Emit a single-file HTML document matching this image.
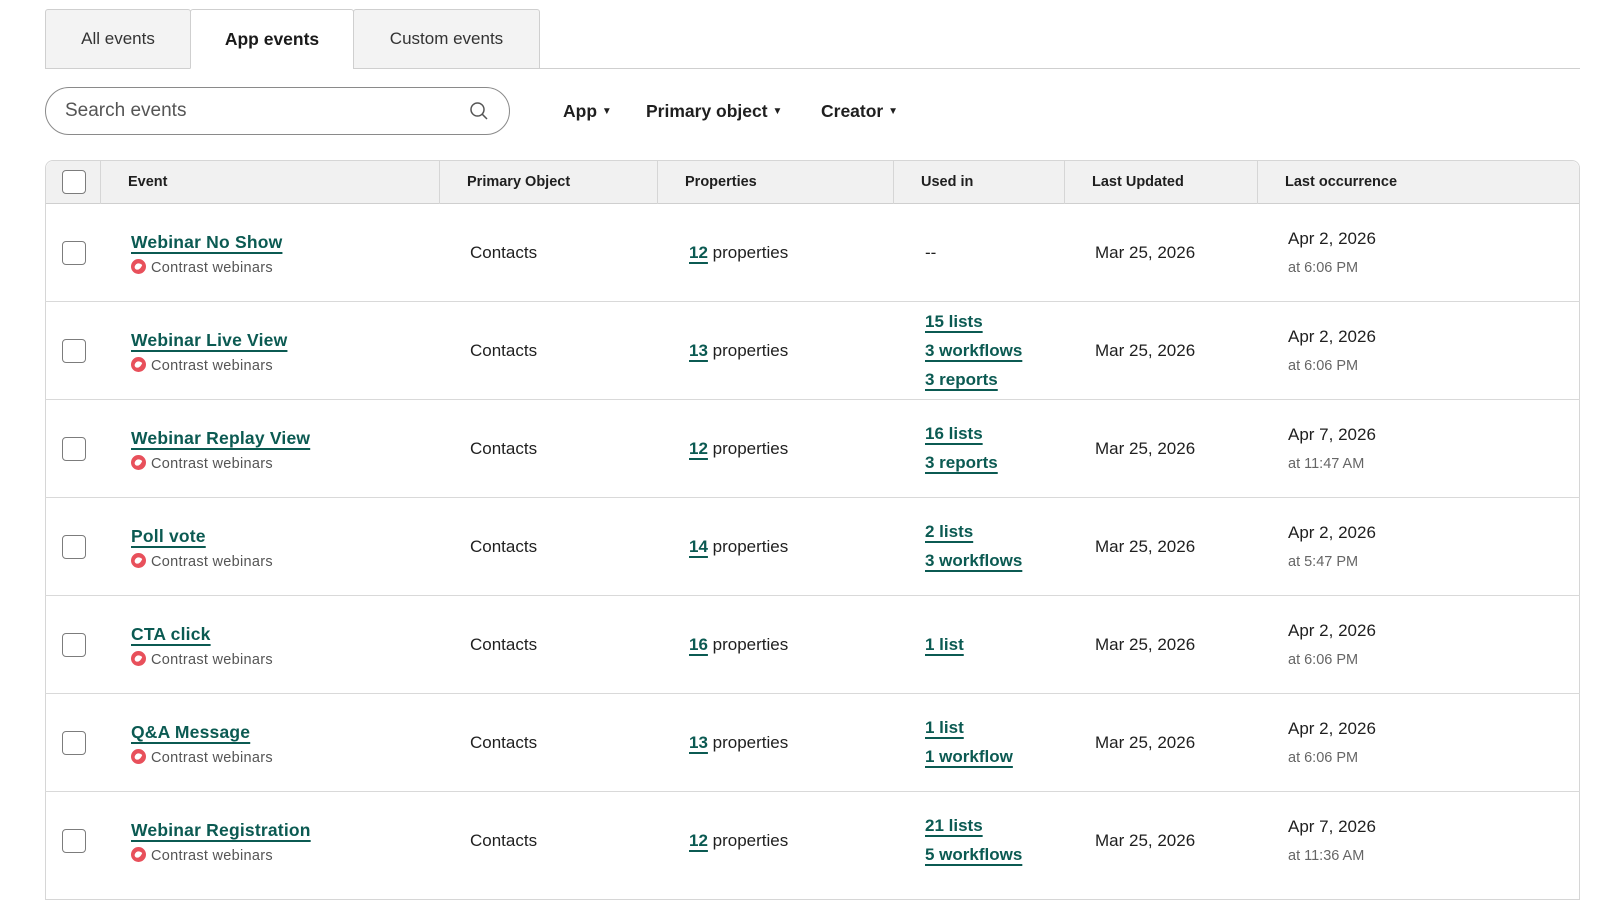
<!DOCTYPE html>
<html><head><meta charset="utf-8">
<style>
*{box-sizing:border-box;margin:0;padding:0}
body{width:1600px;height:883px;background:#fff;font-family:"Liberation Sans",sans-serif;color:#1f1f1f;position:relative;overflow:hidden}
.abs{position:absolute}
.tab{position:absolute;top:9px;height:60px;border:1px solid #cfcfcf;background:#f3f3f3;font-size:17px;color:#333;display:flex;align-items:center;justify-content:center;border-radius:3px 3px 0 0}
.tab.active{background:#fff;border-bottom:1px solid #fff;font-weight:bold;color:#1a1a1a;font-size:17.5px}
.link{color:#0b5a52;font-weight:bold;text-decoration:underline;text-decoration-thickness:1.5px;text-underline-offset:4px}
.hd{position:absolute;top:160px;height:44px;font-size:14.5px;font-weight:bold;display:flex;align-items:center;border-left:1px solid #d6d6d6}
.cb{position:absolute;left:62px;width:24px;height:24px;border:1.5px solid #7c7c7c;border-radius:4px;background:#fff}
.row{position:absolute;left:45px;width:1535px;height:98px;border-bottom:1px solid #d9d9d9}
.t{position:absolute;font-size:17px;white-space:nowrap}
.t.link.ev{font-size:17.5px;letter-spacing:0.2px}
.src{position:absolute;font-size:14.5px;color:#555;white-space:nowrap;letter-spacing:0.3px}
.ic{display:inline-block;width:15px;height:15px;border-radius:50%;background:#e8505b;vertical-align:-2px;margin-right:5px;position:relative}
.ic:after{content:"";position:absolute;left:4px;top:4px;width:6px;height:7px;background:#fff;border-radius:60% 10% 60% 40%;transform:rotate(30deg)}
.tm{position:absolute;font-size:14.5px;color:#666;white-space:nowrap}
</style></head><body>
<div class="abs" style="left:45px;top:68px;width:1535px;height:1px;background:#cfcfcf"></div>
<div class="tab" style="left:45px;width:146px">All events</div>
<div class="tab active" style="left:190px;width:164px;height:60px">App events</div>
<div class="tab" style="left:353px;width:187px">Custom events</div>

<div class="abs" style="left:45px;top:87px;width:465px;height:48px;border:1.5px solid #8a8a8a;border-radius:24px"></div>
<div class="abs" style="left:65px;top:100px;font-size:19px;color:#555">Search events</div>
<svg class="abs" style="left:468px;top:100px" width="22" height="22" viewBox="0 0 22 22"><circle cx="9.5" cy="9.5" r="6.5" fill="none" stroke="#555" stroke-width="1.5"/><line x1="14.2" y1="14.2" x2="19" y2="19" stroke="#555" stroke-width="1.5"/></svg>

<div class="abs" style="left:563px;top:101px;font-size:17.5px;font-weight:bold">App <span style="font-size:10px;vertical-align:3px">▼</span></div>
<div class="abs" style="left:646px;top:101px;font-size:17.5px;font-weight:bold">Primary object <span style="font-size:10px;vertical-align:3px">▼</span></div>
<div class="abs" style="left:821px;top:101px;font-size:17.5px;font-weight:bold">Creator <span style="font-size:10px;vertical-align:3px">▼</span></div>

<div class="abs" style="left:45px;top:160px;width:1535px;height:740px;border:1px solid #d6d6d6;border-radius:8px 8px 0 0"></div>
<div class="abs" style="left:46px;top:161px;width:1533px;height:43px;background:#f1f1f1;border-bottom:1px solid #cfcfcf;border-radius:8px 8px 0 0"></div>
<div class="cb" style="top:170px"></div>
<div class="hd" style="left:100px;width:339px;padding-left:27px">Event</div>
<div class="hd" style="left:439px;width:218px;padding-left:27px">Primary Object</div>
<div class="hd" style="left:657px;width:236px;padding-left:27px">Properties</div>
<div class="hd" style="left:893px;width:171px;padding-left:27px">Used in</div>
<div class="hd" style="left:1064px;width:193px;padding-left:27px">Last Updated</div>
<div class="hd" style="left:1257px;width:323px;padding-left:27px">Last occurrence</div>

<div class="row" style="top:204px"></div>
<div class="cb" style="top:241px"></div>
<div class="t link ev" style="left:131px;top:232px">Webinar No Show</div>
<div class="src" style="left:131px;top:259px"><span class="ic"></span>Contrast webinars</div>
<div class="t" style="left:470px;top:243px">Contacts</div>
<div class="t" style="left:689px;top:243px"><span class="link">12</span> properties</div>
<div class="t" style="left:925px;top:243px">--</div>
<div class="t" style="left:1095px;top:243px">Mar 25, 2026</div>
<div class="t" style="left:1288px;top:229px">Apr 2, 2026</div>
<div class="tm" style="left:1288px;top:260px">at 6:06 PM</div>

<div class="row" style="top:302px"></div>
<div class="cb" style="top:339px"></div>
<div class="t link ev" style="left:131px;top:330px">Webinar Live View</div>
<div class="src" style="left:131px;top:357px"><span class="ic"></span>Contrast webinars</div>
<div class="t" style="left:470px;top:341px">Contacts</div>
<div class="t" style="left:689px;top:341px"><span class="link">13</span> properties</div>
<div class="t link" style="left:925px;top:312px">15 lists</div>
<div class="t link" style="left:925px;top:341px">3 workflows</div>
<div class="t link" style="left:925px;top:370px">3 reports</div>
<div class="t" style="left:1095px;top:341px">Mar 25, 2026</div>
<div class="t" style="left:1288px;top:327px">Apr 2, 2026</div>
<div class="tm" style="left:1288px;top:358px">at 6:06 PM</div>

<div class="row" style="top:400px"></div>
<div class="cb" style="top:437px"></div>
<div class="t link ev" style="left:131px;top:428px">Webinar Replay View</div>
<div class="src" style="left:131px;top:455px"><span class="ic"></span>Contrast webinars</div>
<div class="t" style="left:470px;top:439px">Contacts</div>
<div class="t" style="left:689px;top:439px"><span class="link">12</span> properties</div>
<div class="t link" style="left:925px;top:424px">16 lists</div>
<div class="t link" style="left:925px;top:453px">3 reports</div>
<div class="t" style="left:1095px;top:439px">Mar 25, 2026</div>
<div class="t" style="left:1288px;top:425px">Apr 7, 2026</div>
<div class="tm" style="left:1288px;top:456px">at 11:47 AM</div>

<div class="row" style="top:498px"></div>
<div class="cb" style="top:535px"></div>
<div class="t link ev" style="left:131px;top:526px">Poll vote</div>
<div class="src" style="left:131px;top:553px"><span class="ic"></span>Contrast webinars</div>
<div class="t" style="left:470px;top:537px">Contacts</div>
<div class="t" style="left:689px;top:537px"><span class="link">14</span> properties</div>
<div class="t link" style="left:925px;top:522px">2 lists</div>
<div class="t link" style="left:925px;top:551px">3 workflows</div>
<div class="t" style="left:1095px;top:537px">Mar 25, 2026</div>
<div class="t" style="left:1288px;top:523px">Apr 2, 2026</div>
<div class="tm" style="left:1288px;top:554px">at 5:47 PM</div>

<div class="row" style="top:596px"></div>
<div class="cb" style="top:633px"></div>
<div class="t link ev" style="left:131px;top:624px">CTA click</div>
<div class="src" style="left:131px;top:651px"><span class="ic"></span>Contrast webinars</div>
<div class="t" style="left:470px;top:635px">Contacts</div>
<div class="t" style="left:689px;top:635px"><span class="link">16</span> properties</div>
<div class="t link" style="left:925px;top:635px">1 list</div>
<div class="t" style="left:1095px;top:635px">Mar 25, 2026</div>
<div class="t" style="left:1288px;top:621px">Apr 2, 2026</div>
<div class="tm" style="left:1288px;top:652px">at 6:06 PM</div>

<div class="row" style="top:694px"></div>
<div class="cb" style="top:731px"></div>
<div class="t link ev" style="left:131px;top:722px">Q&amp;A Message</div>
<div class="src" style="left:131px;top:749px"><span class="ic"></span>Contrast webinars</div>
<div class="t" style="left:470px;top:733px">Contacts</div>
<div class="t" style="left:689px;top:733px"><span class="link">13</span> properties</div>
<div class="t link" style="left:925px;top:718px">1 list</div>
<div class="t link" style="left:925px;top:747px">1 workflow</div>
<div class="t" style="left:1095px;top:733px">Mar 25, 2026</div>
<div class="t" style="left:1288px;top:719px">Apr 2, 2026</div>
<div class="tm" style="left:1288px;top:750px">at 6:06 PM</div>

<div class="row" style="top:792px;border-bottom:none"></div>
<div class="cb" style="top:829px"></div>
<div class="t link ev" style="left:131px;top:820px">Webinar Registration</div>
<div class="src" style="left:131px;top:847px"><span class="ic"></span>Contrast webinars</div>
<div class="t" style="left:470px;top:831px">Contacts</div>
<div class="t" style="left:689px;top:831px"><span class="link">12</span> properties</div>
<div class="t link" style="left:925px;top:816px">21 lists</div>
<div class="t link" style="left:925px;top:845px">5 workflows</div>
<div class="t" style="left:1095px;top:831px">Mar 25, 2026</div>
<div class="t" style="left:1288px;top:817px">Apr 7, 2026</div>
<div class="tm" style="left:1288px;top:848px">at 11:36 AM</div>
</body></html>
